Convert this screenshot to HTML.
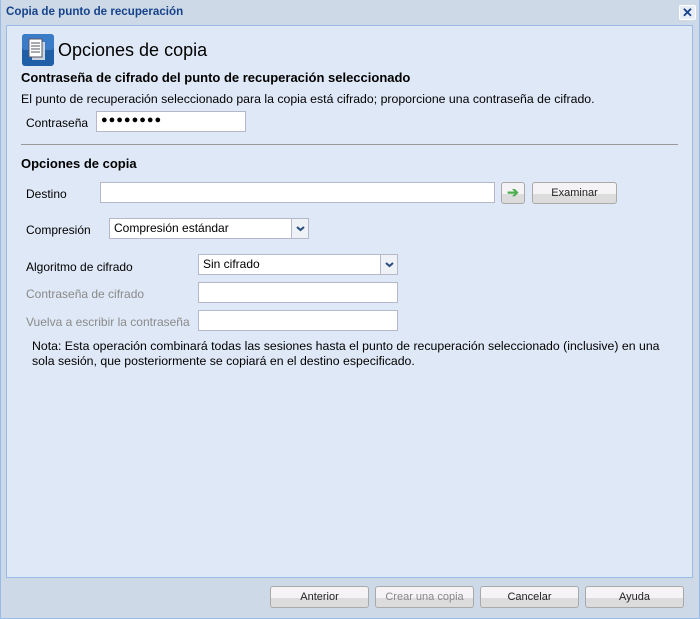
<!DOCTYPE html>
<html><head><meta charset="utf-8"><style>
*{margin:0;padding:0;box-sizing:border-box}
body{width:700px;height:619px;background:#cdd9e6;font-family:"Liberation Sans",sans-serif;font-size:12px;color:#000;position:relative;overflow:hidden}
.abs{position:absolute}
.win{position:absolute;left:0;top:0;width:700px;height:619px;border:1px solid #99bbe8;border-top:none}
.title{left:6px;top:5px;font-weight:bold;color:#15428b;font-size:11.6px}
.panel{left:6px;top:25px;width:687px;height:553px;background:#dfe8f6;border:1px solid #99bbe8}
.inp{position:absolute;background:#fff;border:1px solid #b5b8c8;height:21px;padding:2px 4px;font-size:12px}
.btn{position:absolute;height:22px;border:1px solid #a9a9a9;border-radius:3px;background:linear-gradient(#f6f3f6 0,#f6f3f6 55%,#dcdcdc 55%,#dcdcdc 100%);text-align:center;line-height:21px;font-size:11px;color:#222}
.dd{position:absolute;right:0;top:0;width:17px;height:19px;border-left:1px solid #b5b8c8;background:#eef1f6}
.gray{color:#8a8a8a}
</style></head><body>
<div class="win"></div>
<div class="abs title">Copia de punto de recuperación</div>
<div class="abs" style="left:679px;top:5px;width:17px;height:15px;border:1px solid #fff;border-radius:2px;background:#e7eef8;color:#15428b;font-size:13px;line-height:13px;text-align:center;font-weight:bold">✕</div>
<div class="abs panel"></div>
<svg class="abs" style="left:22px;top:34px" width="32" height="32"><rect x="0" y="0" width="32" height="32" rx="3" fill="#1f5fa8"/><rect x="0" y="0" width="32" height="16" rx="3" fill="#3a7cc8"/><rect x="10" y="8" width="13" height="18" fill="#c9d4e0"/><rect x="7" y="5" width="13" height="18" fill="#fff" stroke="#556"/><g stroke="#556"><line x1="9" y1="9" x2="18" y2="9"/><line x1="9" y1="12" x2="18" y2="12"/><line x1="9" y1="15" x2="18" y2="15"/><line x1="9" y1="18" x2="18" y2="18"/></g></svg>
<div class="abs" style="left:58px;top:40px;font-size:18px">Opciones de copia</div>
<div class="abs" style="left:21px;top:70px;font-weight:bold;font-size:13px">Contraseña de cifrado del punto de recuperación seleccionado</div>
<div class="abs" style="left:21px;top:92px;font-size:12.3px">El punto de recuperación seleccionado para la copia está cifrado; proporcione una contraseña de cifrado.</div>
<div class="abs" style="left:26px;top:116px">Contraseña</div>
<div class="inp" style="left:96px;top:111px;width:150px;letter-spacing:1px;font-size:11px">●●●●●●●●</div>
<div class="abs" style="left:21px;top:144px;width:657px;height:1px;background:#999"></div>
<div class="abs" style="left:21px;top:156px;font-weight:bold;font-size:13px">Opciones de copia</div>
<div class="abs" style="left:26px;top:187px">Destino</div>
<div class="inp" style="left:100px;top:182px;width:395px"></div>
<div class="btn" style="left:501px;top:182px;width:24px;color:#4caf50;font-weight:bold;font-size:14px;line-height:18px">➔</div>
<div class="btn" style="left:532px;top:182px;width:85px">Examinar</div>
<div class="abs" style="left:26px;top:223px">Compresión</div>
<div class="inp" style="left:109px;top:218px;width:200px">Compresión estándar<div class="dd"><svg width="17" height="19"><path d="M5 8l3.5 3 3.5-3" stroke="#2a4d80" stroke-width="2" fill="none"/></svg></div></div>
<div class="abs" style="left:26px;top:260px">Algoritmo de cifrado</div>
<div class="inp" style="left:198px;top:254px;width:200px">Sin cifrado<div class="dd"><svg width="17" height="19"><path d="M5 8l3.5 3 3.5-3" stroke="#2a4d80" stroke-width="2" fill="none"/></svg></div></div>
<div class="abs gray" style="left:26px;top:287px">Contraseña de cifrado</div>
<div class="inp" style="left:198px;top:282px;width:200px"></div>
<div class="abs gray" style="left:26px;top:315px">Vuelva a escribir la contraseña</div>
<div class="inp" style="left:198px;top:310px;width:200px"></div>
<div class="abs" style="left:32px;top:339px;width:630px;line-height:15px;font-size:12.3px">Nota: Esta operación combinará todas las sesiones hasta el punto de recuperación seleccionado (inclusive) en una sola sesión, que posteriormente se copiará en el destino especificado.</div>
<div class="btn" style="left:270px;top:586px;width:99px">Anterior</div>
<div class="btn" style="left:375px;top:586px;width:99px;color:#888">Crear una copia</div>
<div class="btn" style="left:480px;top:586px;width:99px">Cancelar</div>
<div class="btn" style="left:585px;top:586px;width:99px">Ayuda</div>
</body></html>
